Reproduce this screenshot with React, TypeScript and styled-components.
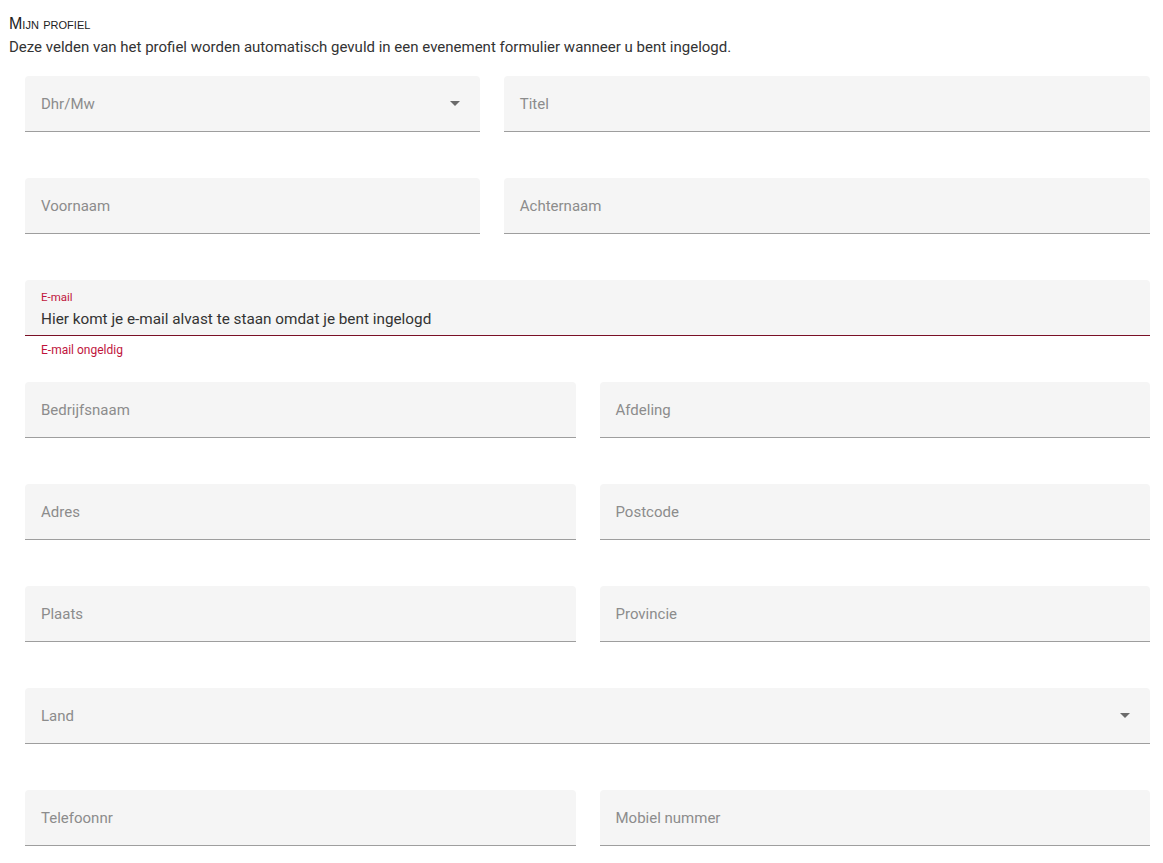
import React, { FunctionComponent } from 'react';
import styled, { createGlobalStyle } from 'styled-components';

const GlobalStyle = createGlobalStyle`
	body {
		margin: 0;
		background: #fff;
		font-family: Roboto, 'Liberation Sans', Arial, sans-serif;
		color: #333;
	}
`;

const Page = styled.div`
	padding: 14px 13px 0 9px;
`;

const Heading = styled.div`
	font-family: 'Liberation Sans', Arial, sans-serif;
	font-variant: small-caps;
	font-size: 16px;
	line-height: 20px;
	color: #222;
`;

const Intro = styled.p`
	margin: 3px 0 0;
	font-size: 15px;
	line-height: 20px;
	color: #333;
`;

const FormGrid = styled.div`
	display: grid;
	grid-template-columns: repeat(12, 1fr);
	column-gap: 24px;
	row-gap: 46px;
	padding: 19px 0 0 16px;
`;

interface CellProps {
	span: number;
}

const Cell = styled.div<CellProps>`
	grid-column: span ${({ span }) => span};
	position: relative;
`;

interface BoxProps {
	error?: boolean;
}

const FieldBox = styled.div<BoxProps>`
	position: relative;
	height: 55px;
	background: #f5f5f5;
	border-radius: 4px 4px 0 0;
	border-bottom: 1px solid ${({ error }) => (error ? '#7a1026' : '#9e9e9e')};
	display: flex;
	align-items: center;
	padding: 0 16px;
	box-sizing: content-box;
`;

const Placeholder = styled.span`
	font-size: 15px;
	color: #8c8c8c;
	flex: 1;
`;

const FilledWrap = styled.div`
	display: flex;
	flex-direction: column;
	padding-top: 3px;
`;

const SmallLabel = styled.span`
	font-size: 11.5px;
	line-height: 14px;
	color: #c0143c;
`;

const Value = styled.span`
	font-size: 15.3px;
	line-height: 20px;
	margin-top: 5px;
	color: #333;
`;

const Helper = styled.div`
	position: absolute;
	left: 16px;
	top: 63px;
	font-size: 12px;
	color: #c0143c;
`;

const Caret = styled.span`
	width: 0;
	height: 0;
	border-left: 5px solid transparent;
	border-right: 5px solid transparent;
	border-top: 5px solid #6b6b6b;
	margin-right: 4px;
`;

interface FieldProps {
	label: string;
	span: number;
	select?: boolean;
}

const Field: FunctionComponent<FieldProps> = ({ label, span, select }) => (
	<Cell span={span}>
		<FieldBox>
			<Placeholder>{label}</Placeholder>
			{select && <Caret />}
		</FieldBox>
	</Cell>
);

const App: FunctionComponent = () => (
	<Page>
		<GlobalStyle />
		<Heading>Mijn profiel</Heading>
		<Intro>Deze velden van het profiel worden automatisch gevuld in een evenement formulier wanneer u bent ingelogd.</Intro>
		<FormGrid>
			<Field label='Dhr/Mw' span={5} select />
			<Field label='Titel' span={7} />
			<Field label='Voornaam' span={5} />
			<Field label='Achternaam' span={7} />
			<Cell span={12}>
				<FieldBox error>
					<FilledWrap>
						<SmallLabel>E-mail</SmallLabel>
						<Value>Hier komt je e-mail alvast te staan omdat je bent ingelogd</Value>
					</FilledWrap>
				</FieldBox>
				<Helper>E-mail ongeldig</Helper>
			</Cell>
			<Field label='Bedrijfsnaam' span={6} />
			<Field label='Afdeling' span={6} />
			<Field label='Adres' span={6} />
			<Field label='Postcode' span={6} />
			<Field label='Plaats' span={6} />
			<Field label='Provincie' span={6} />
			<Field label='Land' span={12} select />
			<Field label='Telefoonnr' span={6} />
			<Field label='Mobiel nummer' span={6} />
		</FormGrid>
	</Page>
);

export default App;
